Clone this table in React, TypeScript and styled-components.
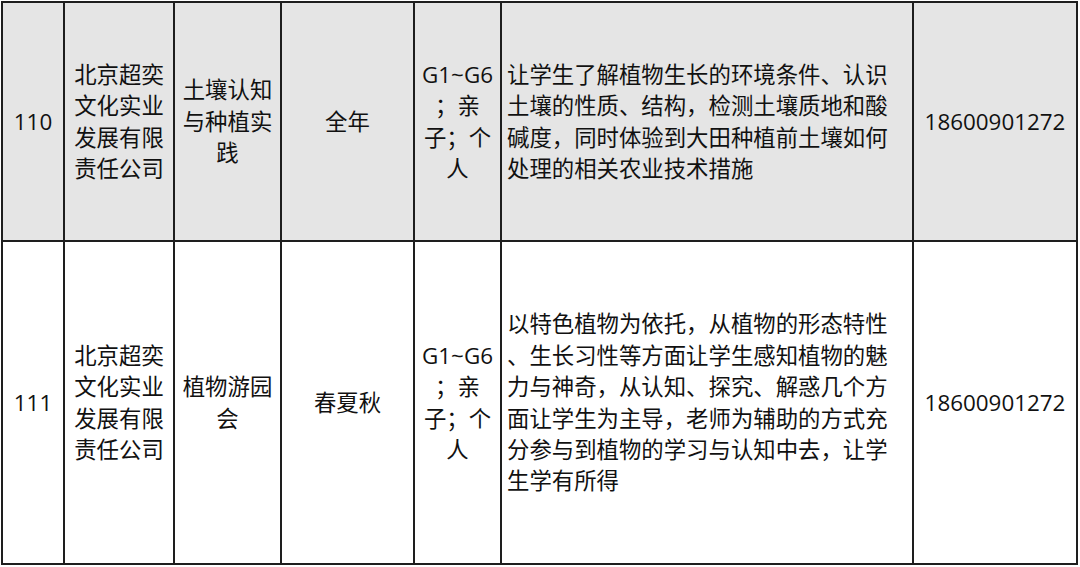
import * as React from "react";
import styled, { createGlobalStyle } from "styled-components";

const GlobalStyle = createGlobalStyle`
  html, body {
    margin: 0;
    padding: 0;
    background: #ffffff;
  }
  body {
    font-family: "Open Sans", "Noto Sans CJK SC", sans-serif;
    color: #111111;
  }
`;

const Sheet = styled.div`
  display: grid;
  grid-template-columns: 60px 108px 105px 131px 85px 410px 162px;
  grid-template-rows: 237px 321px;
  gap: 2px;
  padding: 2px;
  width: max-content;
  margin: 1px 0 0 1px;
  background: #1e1e1e;
`;

interface ICell {
  shaded?: boolean;
  left?: boolean;
}

const Cell = styled.div<ICell>`
  display: flex;
  flex-direction: column;
  align-items: ${props => (props.left ? "flex-start" : "center")};
  justify-content: center;
  text-align: ${props => (props.left ? "left" : "center")};
  padding: ${props => (props.left ? "0 0 0 5px" : "0 4px")};
  background: ${props => (props.shaded ? "#e5e5e5" : "#ffffff")};
  font-size: 22.4px;
  line-height: 31.4px;
  overflow: hidden;
`;

const Line = styled.span`
  display: block;
  white-space: nowrap;
`;

interface IRow {
  no: string;
  org: string;
  course: string;
  season: string;
  grades: string[];
  desc: string[];
  phone: string;
  shaded?: boolean;
}

const rows: IRow[] = [
  {
    no: "110",
    org: "北京超奕文化实业发展有限责任公司",
    course: "土壤认知与种植实践",
    season: "全年",
    grades: ["G1~G6", "；亲", "子；个", "人"],
    desc: [
      "让学生了解植物生长的环境条件、认识",
      "土壤的性质、结构，检测土壤质地和酸",
      "碱度，同时体验到大田种植前土壤如何",
      "处理的相关农业技术措施",
    ],
    phone: "18600901272",
    shaded: true,
  },
  {
    no: "111",
    org: "北京超奕文化实业发展有限责任公司",
    course: "植物游园会",
    season: "春夏秋",
    grades: ["G1~G6", "；亲", "子；个", "人"],
    desc: [
      "以特色植物为依托，从植物的形态特性",
      "、生长习性等方面让学生感知植物的魅",
      "力与神奇，从认知、探究、解惑几个方",
      "面让学生为主导，老师为辅助的方式充",
      "分参与到植物的学习与认知中去，让学",
      "生学有所得",
    ],
    phone: "18600901272",
  },
];

export default function App() {
  return (
    <>
      <GlobalStyle />
      <Sheet>
        {rows.map(row => (
          <React.Fragment key={row.no}>
            <Cell shaded={row.shaded}>{row.no}</Cell>
            <Cell shaded={row.shaded}>{row.org}</Cell>
            <Cell shaded={row.shaded}>{row.course}</Cell>
            <Cell shaded={row.shaded}>{row.season}</Cell>
            <Cell shaded={row.shaded}>
              {row.grades.map((g, i) => (
                <Line key={i}>{g}</Line>
              ))}
            </Cell>
            <Cell shaded={row.shaded} left>
              {row.desc.map((d, i) => (
                <Line key={i}>{d}</Line>
              ))}
            </Cell>
            <Cell shaded={row.shaded}>{row.phone}</Cell>
          </React.Fragment>
        ))}
      </Sheet>
    </>
  );
}
